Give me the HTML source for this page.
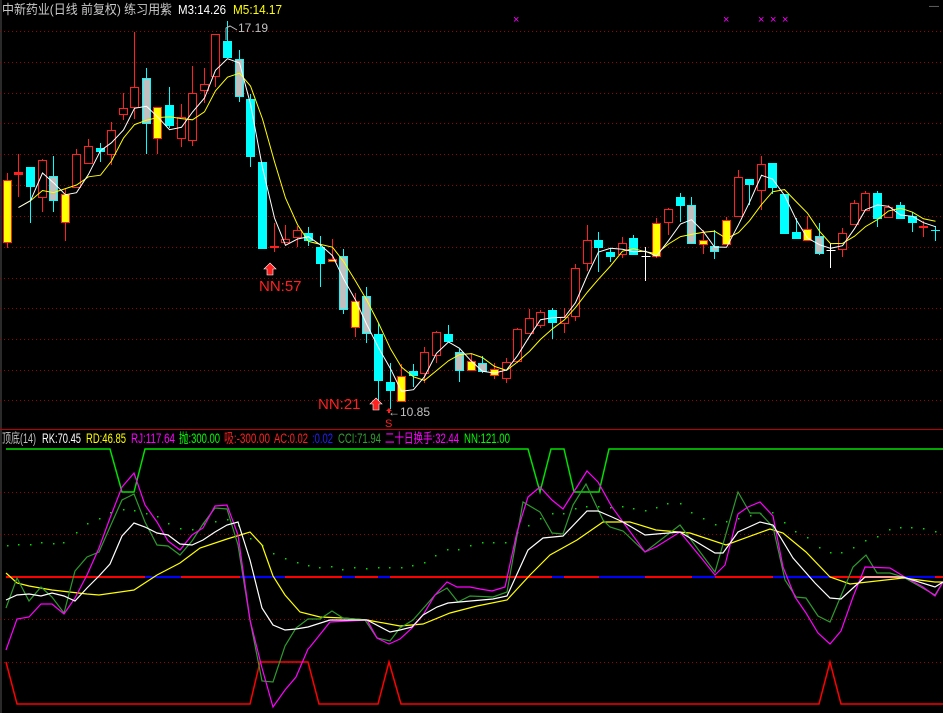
<!DOCTYPE html>
<html><head><meta charset="utf-8"><style>
html,body{margin:0;padding:0;background:#000;width:943px;height:713px;overflow:hidden}
svg{display:block}
text{font-family:"Liberation Sans","Noto Sans CJK SC",sans-serif}
</style></head><body>
<svg id="s" width="943" height="713" xmlns="http://www.w3.org/2000/svg">
<rect width="943" height="713" fill="#000"/>
<line x1="1" y1="0" x2="1" y2="713" stroke="#555" stroke-width="1"/>
<g id="grid" stroke="#a00000" stroke-width="1" stroke-dasharray="1,3"></g>
<line x1="0" y1="429.5" x2="943" y2="429.5" stroke="#c00000" stroke-width="1"/>
<g id="cand"></g>
<g id="ma" fill="none" stroke-width="1"></g>
<g id="low" fill="none"></g>
<text x="2" y="14" font-size="13" fill="#c8c8c8" textLength="170" lengthAdjust="spacingAndGlyphs">中新药业(日线 前复权) 练习用紫</text>
<text x="178" y="14" font-size="13" fill="#ffffff" textLength="48" lengthAdjust="spacingAndGlyphs">M3:14.26</text>
<text x="233" y="14" font-size="13" fill="#ffff00" textLength="49" lengthAdjust="spacingAndGlyphs">M5:14.17</text>
<g font-size="11" fill="#ff00ff"><text x="513" y="23">×</text><text x="723" y="23">×</text><text x="758" y="23">×</text><text x="770" y="23">×</text><text x="782" y="23">×</text></g>
<text x="929" y="9" font-size="10" fill="#888">—</text>
<polyline points="226,40 226,28 230,26 237,30" fill="none" stroke="#bbb" stroke-width="1"/>
<text x="238" y="32" font-size="12" fill="#c0c0c0">17.19</text>
<polygon points="270,263 276,269 273,269 273,275 267,275 267,269 264,269" fill="#ff2020" stroke="#fff" stroke-width="0.6"/>
<text x="259" y="291" font-size="15" fill="#ff2020">NN:57</text>
<text x="318" y="409" font-size="15" fill="#ff2020">NN:21</text>
<polygon points="376,398 382,404 379,404 379,410 373,410 373,404 370,404" fill="#ff2020" stroke="#fff" stroke-width="0.6"/>
<text x="388" y="416" font-size="12" fill="#c0c0c0">←10.85</text>
<polygon points="389,408 392,411 390,411 390,413 388,413 388,411 386,411" fill="#ff2020"/>
<text x="385" y="427" font-size="11" fill="#ff2020">S</text>
<g font-size="13.5">
<text x="2" y="443" fill="#c0c0c0" textLength="34" lengthAdjust="spacingAndGlyphs">顶底(14)</text>
<text x="42" y="443" fill="#ffffff" textLength="39" lengthAdjust="spacingAndGlyphs">RK:70.45</text>
<text x="86" y="443" fill="#ffff00" textLength="40" lengthAdjust="spacingAndGlyphs">RD:46.85</text>
<text x="131" y="443" fill="#ff00ff" textLength="44" lengthAdjust="spacingAndGlyphs">RJ:117.64</text>
<text x="179" y="443" fill="#00ff00" textLength="41" lengthAdjust="spacingAndGlyphs">抛:300.00</text>
<text x="224" y="443" fill="#ff2020" textLength="46" lengthAdjust="spacingAndGlyphs">吸:-300.00</text>
<text x="274" y="443" fill="#ff2020" textLength="34" lengthAdjust="spacingAndGlyphs">AC:0.02</text>
<text x="312" y="443" fill="#2020ff" textLength="21" lengthAdjust="spacingAndGlyphs">:0.02</text>
<text x="338" y="443" fill="#33a033" textLength="43" lengthAdjust="spacingAndGlyphs">CCI:71.94</text>
<text x="385" y="443" fill="#ff00ff" textLength="74" lengthAdjust="spacingAndGlyphs">二十日换手:32.44</text>
<text x="464" y="443" fill="#00ff00" textLength="46" lengthAdjust="spacingAndGlyphs">NN:121.00</text>
</g>
</svg>
<script>
var NS="http://www.w3.org/2000/svg";
function el(p,t,a){var e=document.createElementNS(NS,t);for(var k in a)e.setAttribute(k,a[k]);p.appendChild(e);return e;}
var G=document.getElementById('grid');
[31,62,93,123,154,185,216,247,278,308,339,370,400,492,534,619,662].forEach(function(y){el(G,'line',{x1:0,y1:y+.5,x2:943,y2:y+.5});});
var D="Y 180 243 173 248|R 172 174 154 197|C 167 187 167 223|R 160 198 159 212|G 176 201 156 212|Y 194 223 189 241|R 154 188 149 188|R 146 164 139 164|C 148 152 143 162|R 130 155 122 165|R 108 115 93 120|R 87 108 32 119|G 78 124 68 154|Y 107 139 107 154|C 105 126 87 128|R 117 139 104 147|R 93 141 66 146|R 84 91 68 103|R 34 77 34 87|C 41 58 21 58|G 59 97 50 102|C 99 157 94 167|C 162 249 162 249|Y 246 248 223 252|R 239 243 225 243|R 230 238 226 247|C 233 241 227 246|C 247 264 236 287|Y 259 262 239 262|G 256 310 249 314|Y 301 328 293 337|G 296 334 287 343|C 334 381 323 407|C 382 391 363 409|Y 376 402 364 402|C 371 376 364 387|R 352 374 347 383|R 332 356 331 363|C 334 342 325 342|G 352 371 349 382|Y 361 371 354 371|G 363 372 356 373|Y 369 376 363 379|R 362 379 358 383|R 329 362 328 363|R 318 334 309 334|R 312 326 310 328|C 310 323 308 339|R 317 324 308 333|R 268 317 264 321|R 240 264 225 271|C 240 248 232 272|C 252 257 248 262|R 243 255 237 258|C 238 255 235 255|W 256 256 247 281|Y 223 257 218 258|R 209 223 208 235|C 197 206 193 222|G 205 244 197 244|Y 240 245 230 254|G 246 252 230 259|Y 220 245 217 245|R 177 217 170 217|C 179 185 179 205|R 164 191 156 210|C 163 188 163 194|C 194 234 194 234|C 232 239 218 239|Y 229 241 216 241|G 236 254 223 255|W 250 250 243 268|R 233 250 228 257|R 203 225 200 225|R 193 211 191 211|C 193 219 191 227|R 207 218 205 218|C 205 219 202 219|C 216 223 212 232|R 226 227 221 237|C 230 231 226 241".split('|');
var C=document.getElementById('cand'),closes=[],xs=[];
D.forEach(function(s,i){var p=s.split(' '),t=p[0],o=+p[1],b=+p[2],h=+p[3],l=+p[4];var x=Math.round(6.7+11.6*i)+.5;xs.push(x);
 var wc={R:'#ff2020',C:'#00ffff',G:'#00ffff',Y:'#ff2020',W:'#ffffff'}[t];
 if(h<o)el(C,'line',{x1:x,y1:h,x2:x,y2:o,stroke:wc});
 if(l>b)el(C,'line',{x1:x,y1:b,x2:x,y2:l,stroke:wc});
 var hgt=Math.max(b-o,1);
 if(t=='W'){el(C,'line',{x1:x-4,y1:o+.5,x2:x+5,y2:o+.5,stroke:'#fff'});closes.push(o);}
 else if(t=='R'){ if(hgt<4)el(C,'rect',{x:x-4.5,y:o,width:9,height:hgt+1,fill:'#ff2020'});else el(C,'rect',{x:x-4,y:o+.5,width:8,height:hgt-1,fill:'#000',stroke:'#ff2020'});closes.push(o);}
 else if(t=='C'){el(C,'rect',{x:x-4.5,y:o,width:9,height:hgt,fill:'#00ffff'});closes.push(b);}
 else if(t=='G'){el(C,'rect',{x:x-4,y:o+.5,width:8,height:hgt-1,fill:'#c0c0c0',stroke:'#00ffff'});closes.push(b);}
 else {el(C,'rect',{x:x-4,y:o+.5,width:8,height:Math.max(hgt-1,1),fill:'#ffff00',stroke:'#ff2020'});closes.push(b);}
});
var M=document.getElementById('ma');
function ma(n,col){var pts=[];for(var i=1;i<closes.length;i++){var s=0,c=0;for(var j=Math.max(0,i-n+1);j<=i;j++){s+=closes[j];c++;}pts.push(xs[i]+','+(s/c).toFixed(1));}el(M,'polyline',{points:pts.join(' '),stroke:col});}
ma(5,'#ffff00');ma(3,'#ffffff');
var L=document.getElementById('low');
function pl(p,col,w){el(L,'polyline',{points:p,stroke:col,'stroke-width':w||1});}
pl('6,577 943,577','#ff0000',2);
[[145,181],[240,285],[342,355],[378,390],[552,564],[599,645],[692,715],[773,830],[900,935]].forEach(function(a){pl(a[0]+',577 '+a[1]+',577','#0000ff',2);});
pl('6,449 110,449 122,492 134,492 145,449 528,449 540,492 551,449 564,449 574,492 599,492 609,449 943,449','#00e000',1.5);
pl('6,662 17,704 250,704 260,662 308,662 319,704 378,704 389,662 401,704 819,704 830,662 841,704 943,704','#ff0000',1.5);
var dots="7,545 18,544 30,544 41,542 53,543 63,542 76,532 87,523 99,518 110,512 123,509 134,510 146,513 157,516 168,523 180,528 192,529 203,523 215,521 227,519 238,525 250,538 262,545 273,553 285,558 297,562 308,565 319,567 331,566 342,569 354,567 366,568 378,567 389,567 401,567 412,565 424,562 435,555 447,549 458,549 470,545 482,542 493,542 505,542 517,532 528,525 540,518 552,513 563,513 575,508 586,506 598,506 610,507 622,506 633,508 645,510 656,507 667,503 680,503 691,512 703,518 715,524 726,521 738,518 750,515 760,513 772,512 784,522 795,531 807,537 819,547 830,552 841,552 853,547 865,540 877,536 889,529 900,527 911,527 923,528 935,531".split(' ');
dots.forEach(function(d){var q=d.split(',');el(L,'rect',{x:q[0],y:q[1],width:1.5,height:1.5,fill:'#00dd00'});});
pl('6,573 17,583 29,586 52,590 87,594 99,595 134,590 157,575 180,563 200,548 227,539 250,532 262,545 273,576 285,595 300,612 320,617 343,618 367,620 400,626 423,624 450,613 477,606 507,600 530,575 550,555 577,540 603,522 630,522 656,530 690,533 726,545 770,529 783,533 806,552 830,577 850,584 903,578 935,582 943,582','#ffff00',1.2);
pl('6,608 17,578 29,601 41,587 52,597 64,613 75,571 87,557 99,552 110,527 122,500 134,494 145,522 157,545 168,546 180,555 192,541 203,524 215,508 227,509 238,545 250,620 262,681 273,682 285,646 296,628 308,619 320,619 332,611 343,618 365,620 377,638 390,641 400,628 413,620 435,595 447,588 458,602 470,596 493,597 507,592 523,502 540,512 552,533 563,534 573,505 586,484 603,520 610,527 623,531 645,552 680,525 715,572 738,492 750,513 760,513 773,527 785,580 796,597 806,598 818,616 830,622 853,567 866,555 877,573 890,573 903,577 935,595 943,582','#2e9a2e',1.2);
pl('6,650 17,619 29,617 41,604 52,604 64,614 75,598 87,575 99,548 110,518 122,487 134,473 145,505 157,522 168,541 180,550 192,535 203,528 215,506 227,505 238,535 250,620 262,668 273,707 285,690 296,677 308,649 310,647 330,622 367,620 377,638 389,644 400,639 412,628 423,615 435,595 447,582 457,587 470,587 480,589 492,591 505,587 517,532 528,497 540,487 552,500 563,509 575,490 587,471 598,482 612,507 623,522 645,552 656,547 680,532 703,560 715,575 725,565 738,514 748,507 760,502 773,516 783,567 795,597 806,613 818,633 830,644 841,631 853,597 865,567 890,568 903,576 923,587 935,596 943,582','#ff00ff',1.2);
pl('6,600 17,595 29,594 41,596 52,593 64,596 75,601 87,588 99,576 110,564 122,536 134,523 145,527 157,533 168,535 180,544 192,545 203,540 215,532 227,525 238,522 250,560 262,608 273,625 285,630 296,629 308,627 330,620 367,620 390,632 400,630 412,627 423,615 437,607 448,603 493,599 507,596 528,550 543,538 563,536 587,511 598,511 612,517 623,522 645,535 680,532 715,553 723,553 738,532 760,522 773,525 793,558 815,583 830,598 841,599 865,577 903,577 935,587 943,582','#ffffff',1.2);
</script>
</body></html>
